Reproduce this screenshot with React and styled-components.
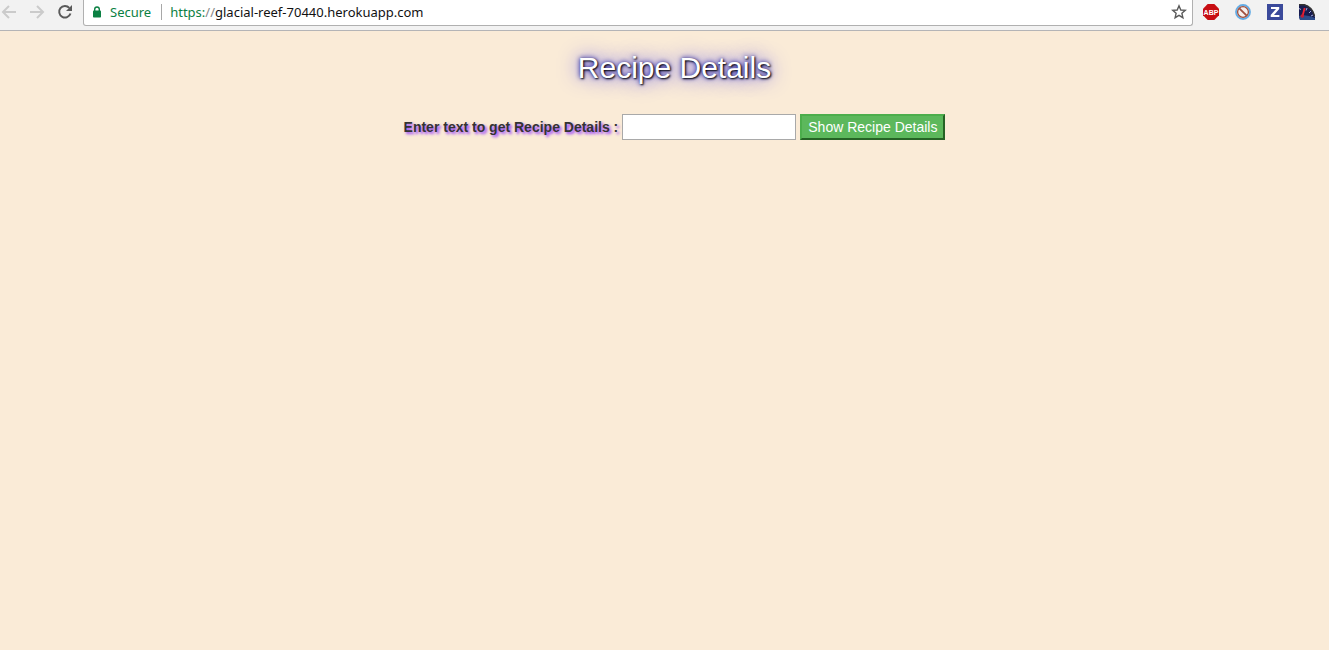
import React from "react";
import styled, { createGlobalStyle } from "styled-components";

const GlobalStyle = createGlobalStyle`
  *, *::before, *::after { box-sizing: border-box; }
  body {
    margin: 0;
    background: #faebd7;
    color: #333;
    font: 14px/20px "Liberation Sans", Arial, sans-serif;
  }
`;

const Toolbar = styled.header`
  display: flex;
  align-items: flex-start;
  height: 31px;
  background: #f2f2f2;
  border-bottom: 1px solid #b4b4b6;
`;

const NavButtons = styled.nav`
  display: flex;
  gap: 4px;
  width: 83px;
`;

const IconButton = styled.button`
  display: flex;
  flex: none;
  align-items: center;
  justify-content: center;
  width: 24px;
  height: 24px;
  padding: 0;
  border: 0;
  background: none;
  color: ${(p) => p.$color || "#5a5a5a"};
`;

const BackButton = styled(IconButton)`
  width: 21px;
  padding-right: 4px;
`;

const AddressBar = styled.div`
  display: flex;
  flex: 1;
  align-items: center;
  min-width: 0;
  height: 26px;
  padding: 0 1px 1px 8px;
  background: #fff;
  border: 1px solid #b0b0b0;
  border-top: 0;
  border-radius: 0 0 3px 3px;
  font: 13px/20px "Noto Sans", "Open Sans", sans-serif;
`;

const Secure = styled.span`
  display: flex;
  align-items: center;
  gap: 8px;
  padding-right: 10px;
  color: #0b8043;
`;

const Divider = styled.span`
  width: 1px;
  height: 16px;
  background: #a8a8a8;
`;

const AddressLink = styled.a`
  flex: 1;
  padding-left: 8px;
  color: #111;
  text-decoration: none;
`;

const Scheme = styled.span`
  color: #0b8043;
`;

const Slashes = styled.span`
  color: #888;
`;

const Extensions = styled.div`
  display: flex;
  gap: 8px;
  padding: 0 10px 0 6px;
`;

const Page = styled.main`
  padding: 20px 0 0 20px;
  text-align: center;
`;

const Title = styled.h1`
  margin: 0;
  color: #fff;
  font-size: 30px;
  font-weight: 400;
  line-height: 33px;
  text-shadow: 1px 1px 2px black, 0 0 20px rgba(0, 0, 255, 0.8), 0 0 5px darkblue;
`;

const SearchForm = styled.form`
  display: flex;
  align-items: center;
  justify-content: center;
  gap: 4px;
  margin-top: 30px;
`;

const Label = styled.label`
  font-weight: 700;
  text-shadow: 2px 2px 3px #9030ff;
`;

const TextInput = styled.input`
  width: 174px;
  height: 26px;
  padding: 1px 2px;
  background: #fff;
  border: 1px solid #a9a9a9;
  border-radius: 0;
  color: inherit;
  font: inherit;
`;

const SubmitButton = styled.button`
  height: 26px;
  padding: 0 6px;
  background: #5cb85c;
  border: 2px solid;
  border-color: #4cae4c #256325 #256325 #4cae4c;
  color: #fff;
  font: inherit;
`;

function Arrow({ flip }) {
  return (
    <svg width="16" height="16" viewBox="0 0 16 16" fill="none" stroke="currentColor" strokeWidth="2">
      <path d={flip ? "M1 8H14M8 2L14 8L8 14" : "M15 8H2M8 2L2 8L8 14"} />
    </svg>
  );
}

function Reload() {
  return (
    <svg width="16" height="16" viewBox="0 0 16 16">
      <path d="M13.5 9.5A5.8 5.8 0 1 1 12.3 3.8" fill="none" stroke="currentColor" strokeWidth="2" />
      <path d="M15 1V7H9Z" fill="currentColor" />
    </svg>
  );
}

function Lock() {
  return (
    <svg width="10" height="12" viewBox="0 0 10 12">
      <path d="M2.7 5V3.3a2.3 2.3 0 0 1 4.6 0V5" fill="none" stroke="#0b8043" strokeWidth="1.4" />
      <rect x="1" y="4.5" width="8" height="7" rx="0.8" fill="#0b8043" />
    </svg>
  );
}

function Star() {
  return (
    <svg width="16" height="16" viewBox="0 0 16 16" fill="none" stroke="currentColor" strokeWidth="1.4">
      <path d="M8 1.8L9.8 6L14.3 6.4L10.9 9.3L11.9 13.7L8 11.4L4.1 13.7L5.1 9.3L1.7 6.4L6.2 6Z" />
    </svg>
  );
}

function AdBlock() {
  return (
    <svg width="16" height="16" viewBox="0 0 16 16">
      <path d="M4.7 0H11.3L16 4.7V11.3L11.3 16H4.7L0 11.3V4.7Z" fill="#c70d12" />
      <text x="8" y="10.8" fill="#fff" fontFamily="Liberation Sans, sans-serif" fontSize="7" fontWeight="700" textAnchor="middle">ABP</text>
    </svg>
  );
}

function Blocked() {
  return (
    <svg width="16" height="16" viewBox="0 0 16 16" fill="none">
      <circle cx="8" cy="8" r="7" fill="#f7f1ee" stroke="#64ace5" strokeWidth="1.8" />
      <circle cx="8" cy="8" r="5.4" stroke="#a0503f" strokeWidth="1.3" />
      <path d="M4.3 4.3L11.7 11.7" stroke="#a0503f" strokeWidth="1.8" />
    </svg>
  );
}

function Zed() {
  return (
    <svg width="16" height="16" viewBox="0 0 16 16">
      <rect width="16" height="16" fill="#3b4a9b" />
      <path d="M4 3H12.2V5L7 11H12.4V13H3.7V11L9 5H4Z" fill="#fff" />
    </svg>
  );
}

function Gauge() {
  return (
    <svg width="16" height="16" viewBox="0 0 16 16">
      <path d="M0 0H5Q14 3 16 13V16H1L0 13Z" fill="#171b50" />
      <path d="M0 0.7H5Q13.5 3 15.5 12" fill="none" stroke="#343434" strokeWidth="1.4" />
      <path d="M0 12Q7 10 16 14V16H1Z" fill="#2c4d8c" />
      <path d="M0.5 4L1.5 6M8 4L7 6.5M12 7L10 9M14 11L12 12" stroke="#a5adda" strokeWidth="1" />
      <path d="M5.7 4L3.5 12" stroke="#f02030" strokeWidth="1.8" />
      <circle cx="3.3" cy="12" r="1.8" fill="#c51c33" />
    </svg>
  );
}

export default function App() {
  return (
    <>
      <GlobalStyle />
      <Toolbar>
        <NavButtons aria-label="Browser navigation">
          <BackButton type="button" $color="#cbcbcb" aria-label="Back"><Arrow /></BackButton>
          <IconButton type="button" $color="#cbcbcb" aria-label="Forward"><Arrow flip /></IconButton>
          <IconButton type="button" aria-label="Reload"><Reload /></IconButton>
        </NavButtons>
        <AddressBar>
          <Secure><Lock />Secure</Secure>
          <Divider />
          <AddressLink href="https://glacial-reef-70440.herokuapp.com">
            <Scheme>https:</Scheme><Slashes>//</Slashes>glacial-reef-70440.herokuapp.com
          </AddressLink>
          <IconButton type="button" aria-label="Bookmark this page"><Star /></IconButton>
        </AddressBar>
        <Extensions>
          <IconButton type="button" aria-label="Ad blocker"><AdBlock /></IconButton>
          <IconButton type="button" aria-label="Content blocker"><Blocked /></IconButton>
          <IconButton type="button" aria-label="Z extension"><Zed /></IconButton>
          <IconButton type="button" aria-label="Speed gauge"><Gauge /></IconButton>
        </Extensions>
      </Toolbar>
      <Page>
        <Title>Recipe Details</Title>
        <SearchForm onSubmit={(e) => e.preventDefault()}>
          <Label htmlFor="recipe">Enter text to get Recipe Details :</Label>
          <TextInput id="recipe" type="text" />
          <SubmitButton type="submit">Show Recipe Details</SubmitButton>
        </SearchForm>
      </Page>
    </>
  );
}
